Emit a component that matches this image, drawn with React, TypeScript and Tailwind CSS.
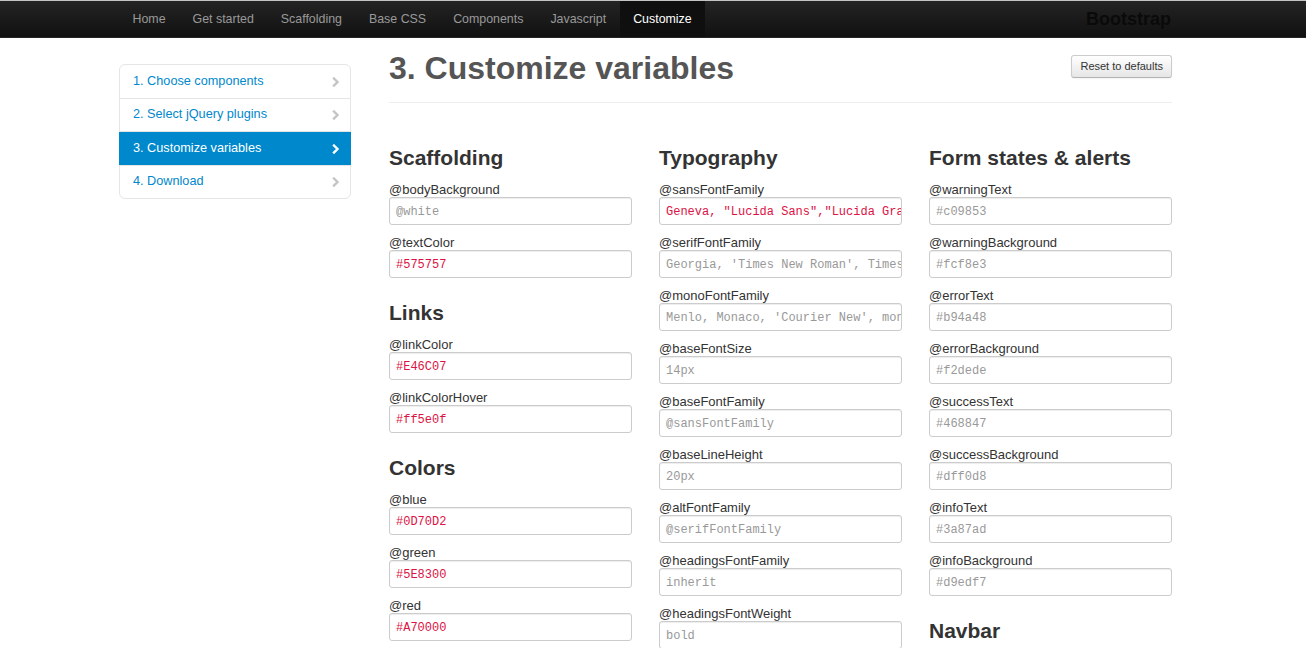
import React from "react";

type Field = { label: string; value: string; red?: boolean };
type Section = { title: string; fields: Field[] };

const col1: Section[] = [
  {
    title: "Scaffolding",
    fields: [
      { label: "@bodyBackground", value: "@white" },
      { label: "@textColor", value: "#575757", red: true },
    ],
  },
  {
    title: "Links",
    fields: [
      { label: "@linkColor", value: "#E46C07", red: true },
      { label: "@linkColorHover", value: "#ff5e0f", red: true },
    ],
  },
  {
    title: "Colors",
    fields: [
      { label: "@blue", value: "#0D70D2", red: true },
      { label: "@green", value: "#5E8300", red: true },
      { label: "@red", value: "#A70000", red: true },
    ],
  },
];

const col2: Section[] = [
  {
    title: "Typography",
    fields: [
      {
        label: "@sansFontFamily",
        value: 'Geneva, "Lucida Sans","Lucida Grande", "Lucida Sans Unicode", Verdana, sans-serif',
        red: true,
      },
      { label: "@serifFontFamily", value: "Georgia, 'Times New Roman', Times, serif" },
      { label: "@monoFontFamily", value: "Menlo, Monaco, 'Courier New', monospace" },
      { label: "@baseFontSize", value: "14px" },
      { label: "@baseFontFamily", value: "@sansFontFamily" },
      { label: "@baseLineHeight", value: "20px" },
      { label: "@altFontFamily", value: "@serifFontFamily" },
      { label: "@headingsFontFamily", value: "inherit" },
      { label: "@headingsFontWeight", value: "bold" },
    ],
  },
];

const col3: Section[] = [
  {
    title: "Form states & alerts",
    fields: [
      { label: "@warningText", value: "#c09853" },
      { label: "@warningBackground", value: "#fcf8e3" },
      { label: "@errorText", value: "#b94a48" },
      { label: "@errorBackground", value: "#f2dede" },
      { label: "@successText", value: "#468847" },
      { label: "@successBackground", value: "#dff0d8" },
      { label: "@infoText", value: "#3a87ad" },
      { label: "@infoBackground", value: "#d9edf7" },
    ],
  },
  { title: "Navbar", fields: [] },
];

const navItems = ["Home", "Get started", "Scaffolding", "Base CSS", "Components", "Javascript", "Customize"];

const sideItems = [
  { text: "1. Choose components", h: "h-[33px]" },
  { text: "2. Select jQuery plugins", h: "h-[33px]" },
  { text: "3. Customize variables", h: "h-[34px]", active: true },
  { text: "4. Download", h: "h-[33px]" },
];

function Chevron({ color }: { color: string }) {
  return (
    <svg width="8" height="10" viewBox="0 0 8 10" className="shrink-0">
      <polyline points="2,1.5 5.5,5 2,8.5" fill="none" stroke={color} strokeWidth="2.4" strokeLinecap="square" />
    </svg>
  );
}

function Column({ sections }: { sections: Section[] }) {
  return (
    <div className="flex flex-col">
      {sections.map((s, i) => (
        <div key={s.title} className={i === 0 ? "" : "mt-[11px]"}>
          <h3 className="text-[21px] leading-[27px] font-bold text-[#333] mb-[11px]">{s.title}</h3>
          {s.fields.map((f) => (
            <div key={f.label} className="mb-[10px]">
              <div className="text-[13px] leading-[15px] h-[15px] text-[#333] whitespace-nowrap">{f.label}</div>
              <div className="h-[28px] border border-[#cccccc] rounded-[3px] bg-white pl-[6px] pr-[2px] overflow-hidden whitespace-nowrap shadow-[inset_0_1px_1px_rgba(0,0,0,0.075)]">
                <span
                  className={
                    "text-[12px] leading-[26px] " + (f.red ? "text-[#dd1144]" : "text-[#999999]")
                  }
                  style={{ fontFamily: '"Liberation Mono", "Courier New", monospace' }}
                >
                  {f.value}
                </span>
              </div>
            </div>
          ))}
        </div>
      ))}
    </div>
  );
}

export default function App() {
  return (
    <div
      className="w-full h-[648px] overflow-hidden bg-white text-[#333]"
      style={{ fontFamily: '"Liberation Sans", Arial, Helvetica, sans-serif' }}
    >
      {/* Navbar */}
      <div className="h-[38px] border-t border-t-[#c4c4c4] bg-gradient-to-b from-[#242424] to-[#111111] border-b border-b-[#252525]">
        <div className="w-[1053px] ml-[119px] flex items-center justify-between h-full">
          <ul className="flex h-full">
            {navItems.map((n) => (
              <li
                key={n}
                className={
                  "px-[13.5px] h-full flex items-center text-[12.4px] " +
                  (n === "Customize" ? "bg-[#0f0f0f] text-white" : "text-[#999999]")
                }
              >
                {n}
              </li>
            ))}
          </ul>
          <div className="text-[18px] font-bold text-[#0a0a0a] pr-[1px]">Bootstrap</div>
        </div>
      </div>

      {/* Body */}
      <div className="flex pl-[119px]">
        {/* Sidebar */}
        <div className="w-[232px] shrink-0 pt-[26px]">
          <ul className="flex flex-col border border-[#e5e5e5] rounded-[6px] bg-white">
            {sideItems.map((it, i) => (
              <li
                key={it.text}
                className={
                  it.h +
                  " flex items-center justify-between text-[12.7px] " +
                  (i > 0 ? "border-t border-[#e5e5e5] " : "") +
                  (it.active
                    ? "bg-[#0088cc] text-white -mx-px pl-[14px] pr-[11px] border-[#0088cc]"
                    : "text-[#0088cc] pl-[13px] pr-[10px]")
                }
              >
                <span>{it.text}</span>
                <Chevron color={it.active ? "#ffffff" : "#c4c4c4"} />
              </li>
            ))}
          </ul>
        </div>

        {/* Content */}
        <div className="w-[783px] ml-[38px]">
          <div className="flex justify-between items-start pt-[10px] pb-[14px] border-b border-[#eeeeee]">
            <h1 className="text-[32px] leading-[40px] font-bold text-[#555555]">3. Customize variables</h1>
            <button className="mt-[7px] h-[23px] px-[8px] text-[11px] text-[#333] rounded-[3px] border border-[#cccccc] border-b-[#b3b3b3] bg-gradient-to-b from-white to-[#e6e6e6] shadow-[inset_0_1px_0_rgba(255,255,255,0.2),0_1px_2px_rgba(0,0,0,0.05)]">
              Reset to defaults
            </button>
          </div>

          <div className="grid grid-cols-[243px_243px_243px] gap-x-[27px] mt-[41px]">
            <Column sections={col1} />
            <Column sections={col2} />
            <Column sections={col3} />
          </div>
        </div>
      </div>
    </div>
  );
}
